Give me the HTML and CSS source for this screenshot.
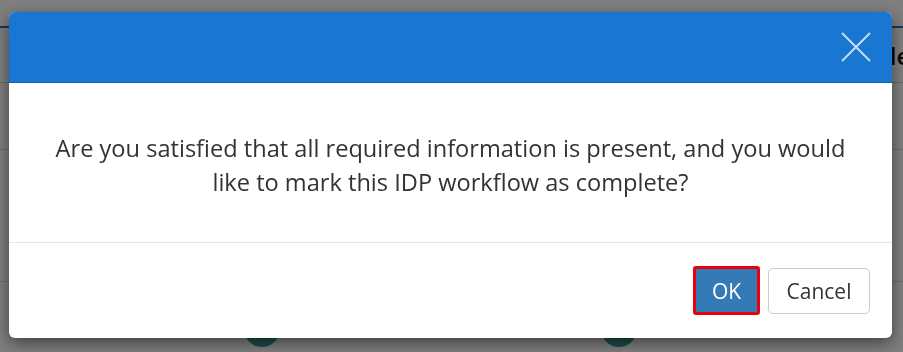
FILE: index.html
```html
<!DOCTYPE html>
<html lang="en">
<head>
    <meta charset="UTF-8">
    <meta name="viewport" content="width=device-width, initial-scale=1.0">
    <title>Complete workflow</title>
    <link rel="stylesheet" href="styles.css">
</head>
<body>
    <div class="page">
        <div class="topbar"></div>
        <div class="page-row">
            <span class="col-title">Title</span>
        </div>
        <div class="page-line"></div>
        <div class="page-line low"></div>
        <div class="page-steps">
            <span class="step"></span>
            <span class="step"></span>
        </div>
    </div>

    <div class="modal-backdrop">
        <div class="modal-content">
            <div class="modal-header">
                <button class="close-btn" aria-label="Close">
                    <svg width="30" height="30" viewBox="0 0 30 30">
                        <path d="M1 1 L29 29 M29 1 L1 29" stroke="rgba(255,255,255,0.75)" stroke-width="2" fill="none"/>
                    </svg>
                </button>
            </div>
            <div class="modal-body">
                <p>Are you satisfied that all required information is present, and you would<br>like to mark this IDP workflow as complete?</p>
            </div>
            <div class="modal-footer">
                <button class="ok-btn">OK</button>
                <button class="cancel-btn">Cancel</button>
            </div>
        </div>
    </div>
</body>
</html>
```

FILE: styles.css
```css
body, html {
    margin: 0;
    padding: 0;
    height: 100%;
    overflow: hidden;
}

body {
    font-family: "Open Sans", "Liberation Sans", sans-serif;
    background: #fff;
}

/* page behind the dialog */
.page {
    height: 100%;
    display: flex;
    flex-direction: column;
}

.topbar {
    height: 26px;
    border-bottom: 2px solid #2a6fb0;
}

.page-row {
    height: 54px;
    display: flex;
    align-items: center;
    padding-left: 860px;
    border-bottom: 1px solid #ccc;
}

.col-title {
    font-size: 24px;
    font-weight: 600;
    color: #111;
    white-space: nowrap;
}

.page-line {
    height: 66px;
    border-bottom: 1px solid #ddd;
}

.page-line.low {
    height: 131px;
}

.page-steps {
    display: flex;
    padding-top: 29px;
    padding-left: 244px;
    gap: 321px;
}

.step {
    flex: none;
    width: 36px;
    height: 36px;
    border-radius: 50%;
    background: #3a9a90;
}

/* dialog */
.modal-backdrop {
    position: fixed;
    inset: 0;
    background-color: rgba(0, 0, 0, 0.5);
    padding: 12px 11px 0 9px;
}

.modal-content {
    height: 326px;
    background: #fff;
    border-radius: 6px;
    overflow: hidden;
    display: flex;
    flex-direction: column;
    box-shadow: 0 5px 16px rgba(0, 0, 0, 0.5);
}

.modal-header {
    height: 70px;
    background: #1976d2;
    border-bottom: 1px solid #1463b3;
    display: flex;
    align-items: center;
    justify-content: flex-end;
    padding-right: 21px;
}

.close-btn {
    background: none;
    border: none;
    padding: 0;
    width: 30px;
    height: 30px;
    cursor: pointer;
    display: flex;
}

.modal-body {
    height: 159px;
    display: flex;
    align-items: center;
    justify-content: center;
    border-bottom: 1px solid #e5e5e5;
}

.modal-body p {
    margin: 0;
    padding-top: 4px;
    text-align: center;
    font-size: 23.6px;
    line-height: 34px;
    color: #333;
}

.modal-footer {
    flex: 1;
    display: flex;
    align-items: center;
    justify-content: flex-end;
    gap: 8px;
    padding: 0 22px 0 0;
}

.ok-btn {
    width: 67px;
    height: 49px;
    background: #337ab7;
    color: #fff;
    border: 3px solid #e8000b;
    border-radius: 3px;
    font-family: inherit;
    font-size: 21px;
    cursor: pointer;
}

.cancel-btn {
    width: 102px;
    height: 46px;
    background: #fff;
    color: #333;
    border: 1px solid #ccc;
    border-radius: 5px;
    font-family: inherit;
    font-size: 21px;
    cursor: pointer;
}
```
